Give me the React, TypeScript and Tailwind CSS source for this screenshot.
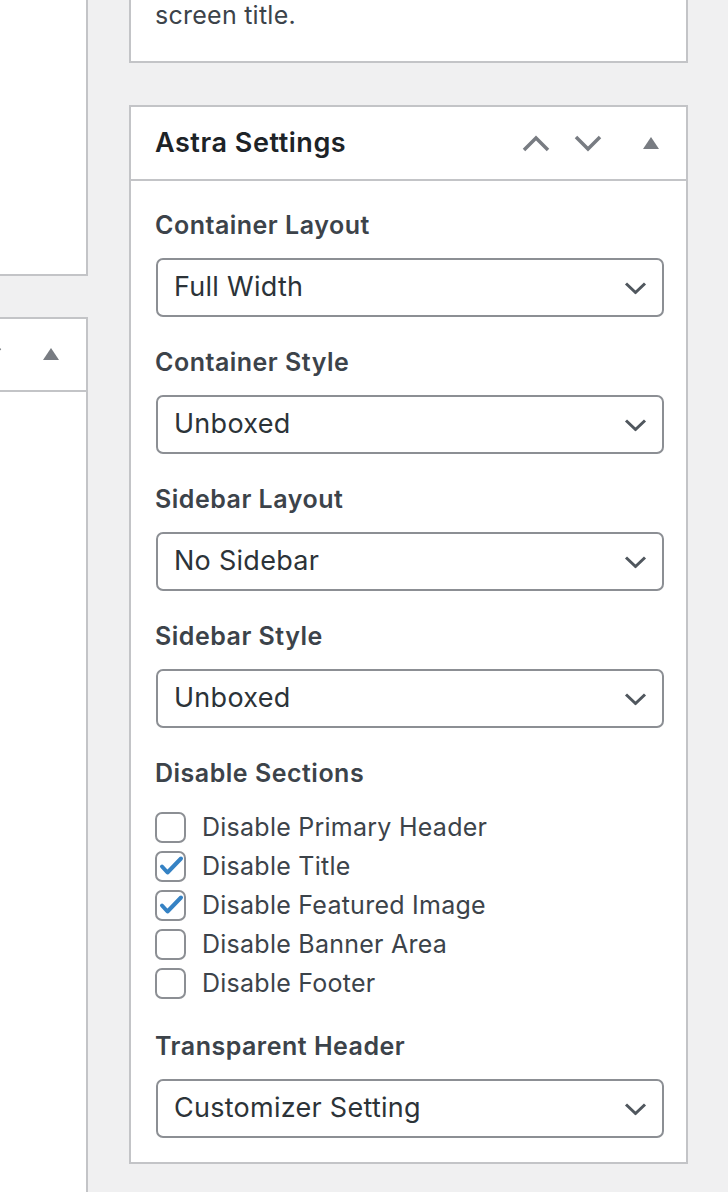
import { useState } from "react";

// Astra のメタボックス設定
const FIELDS_TOP = [
  { label: "Container Layout", value: "Full Width", options: ["Customizer Setting", "Full Width", "Boxed", "Content Boxed"] },
  { label: "Container Style", value: "Unboxed", options: ["Customizer Setting", "Unboxed", "Boxed"] },
  { label: "Sidebar Layout", value: "No Sidebar", options: ["Customizer Setting", "No Sidebar", "Left Sidebar", "Right Sidebar"] },
  { label: "Sidebar Style", value: "Unboxed", options: ["Customizer Setting", "Unboxed", "Boxed"] },
];

const SECTIONS = [
  { id: "header", label: "Disable Primary Header", checked: false },
  { id: "title", label: "Disable Title", checked: true },
  { id: "featured", label: "Disable Featured Image", checked: true },
  { id: "banner", label: "Disable Banner Area", checked: false },
  { id: "footer", label: "Disable Footer", checked: false },
];

const FONT = "font-['Inter','Noto_Sans',sans-serif]";

function ChevronUp() {
  return (
    <svg className="shrink-0" width="28" height="17" viewBox="0 0 28 17" fill="none">
      <polyline points="2,15 14,3 26,15" stroke="#787c82" strokeWidth="3.5" />
    </svg>
  );
}

function ChevronDown() {
  return (
    <svg className="shrink-0" width="28" height="17" viewBox="0 0 28 17" fill="none">
      <polyline points="2,2 14,14 26,2" stroke="#787c82" strokeWidth="3.5" />
    </svg>
  );
}

function Triangle() {
  return (
    <svg className="shrink-0" width="16" height="12" viewBox="0 0 16 12">
      <polygon points="8,0 16,12 0,12" fill="#787c82" />
    </svg>
  );
}

function Select({ value, options }: { value: string; options: string[] }) {
  const [v, setV] = useState(value);
  return (
    <div className="relative ml-px -mr-[2px]">
      <select
        value={v}
        onChange={(e) => setV(e.target.value)}
        className={`${FONT} w-full h-[59px] appearance-none bg-white border-2 border-[#8c8f94] rounded-[7px] pl-4 pr-12 text-[27px] tracking-[0.01em] text-[#2c3338] outline-none`}
      >
        {options.map((o) => (
          <option key={o} value={o}>{o}</option>
        ))}
      </select>
      <svg
        className="absolute right-[17px] top-1/2 -translate-y-1/2 pointer-events-none"
        width="23" height="13" viewBox="0 0 23 13" fill="none"
      >
        <polyline points="2,2 11.5,11 21,2" stroke="#50575e" strokeWidth="3" />
      </svg>
    </div>
  );
}

function Label({ children }: { children: string }) {
  return (
    <div className="text-[25px] leading-[34px] tracking-[0.02em] font-semibold text-[#3c434a]">{children}</div>
  );
}

function Checkbox({ label, initial }: { label: string; initial: boolean }) {
  const [on, setOn] = useState(initial);
  return (
    <label className="h-[39px] flex items-center gap-[16px] cursor-pointer" onClick={() => setOn(!on)}>
      <span className="w-[31px] h-[31px] shrink-0 rounded-[7px] border-2 border-[#8c8f94] bg-white relative">
        {on && (
          <svg className="absolute -left-[2px] -top-[2px]" width="31" height="31" viewBox="0 0 31 31" fill="none">
            <path d="M7 15.5 L12.5 21.5 L26 7.5" stroke="#3582c4" strokeWidth="4" strokeLinecap="round" strokeLinejoin="round" />
          </svg>
        )}
      </span>
      <span className="text-[25px] tracking-[0.01em] text-[#3c434a]">{label}</span>
    </label>
  );
}

export default function App() {
  return (
    <div className={`${FONT} min-h-[1192px] bg-[#f0f0f1] flex overflow-hidden`}>
      {/* 左カラム（見切れているメタボックス） */}
      <div className="w-[88px] shrink-0 flex flex-col">
        <div className="h-[276px] bg-white border-r-2 border-b-2 border-[#c3c4c7]" />
        <div className="mt-[41px] flex-1 bg-white border-r-2 border-t-2 border-[#c3c4c7] flex flex-col">
          <div className="h-[74px] border-b-2 border-[#c3c4c7] flex items-center justify-end pr-[27px] gap-[41px] -mt-[1px]">
            <ChevronDown />
            <Triangle />
          </div>
        </div>
      </div>

      {/* 右カラム */}
      <div className="ml-[41px] w-[559px] shrink-0">
        <div className="h-[63px] bg-white border-x-2 border-b-2 border-[#c3c4c7] px-6 flex flex-col justify-end pb-[29px]">
          <p className="text-[25px] leading-[33px] tracking-[0.01em] text-[#3c434a]">screen title.</p>
        </div>

        <div className="mt-[42px] bg-white border-2 border-[#c3c4c7]">
          <div className="h-[74px] border-b-2 border-[#c3c4c7] flex items-center pl-6 pr-[27px]">
            <h2 className="flex-1 text-[27px] leading-[36px] tracking-[0.02em] font-semibold text-[#1d2327]">
              Astra Settings
            </h2>
            <div className="flex items-center">
              <ChevronUp />
              <span className="ml-[24px] flex"><ChevronDown /></span>
              <span className="ml-[41px] flex"><Triangle /></span>
            </div>
          </div>

          <div className="px-6 pt-[27px] pb-[24px]">
            {FIELDS_TOP.map((f) => (
              <div key={f.label} className="mb-[28px]">
                <Label>{f.label}</Label>
                <div className="mt-[16px]">
                  <Select value={f.value} options={f.options} />
                </div>
              </div>
            ))}

            <Label>Disable Sections</Label>
            <div className="mt-[18px]">
              {SECTIONS.map((s) => (
                <Checkbox key={s.id} label={s.label} initial={s.checked} />
              ))}
            </div>

            <div className="mt-[26px]">
              <Label>Transparent Header</Label>
              <div className="mt-[16px]">
                <Select value="Customizer Setting" options={["Customizer Setting", "Enabled", "Disabled"]} />
              </div>
            </div>
          </div>
        </div>
      </div>
    </div>
  );
}
